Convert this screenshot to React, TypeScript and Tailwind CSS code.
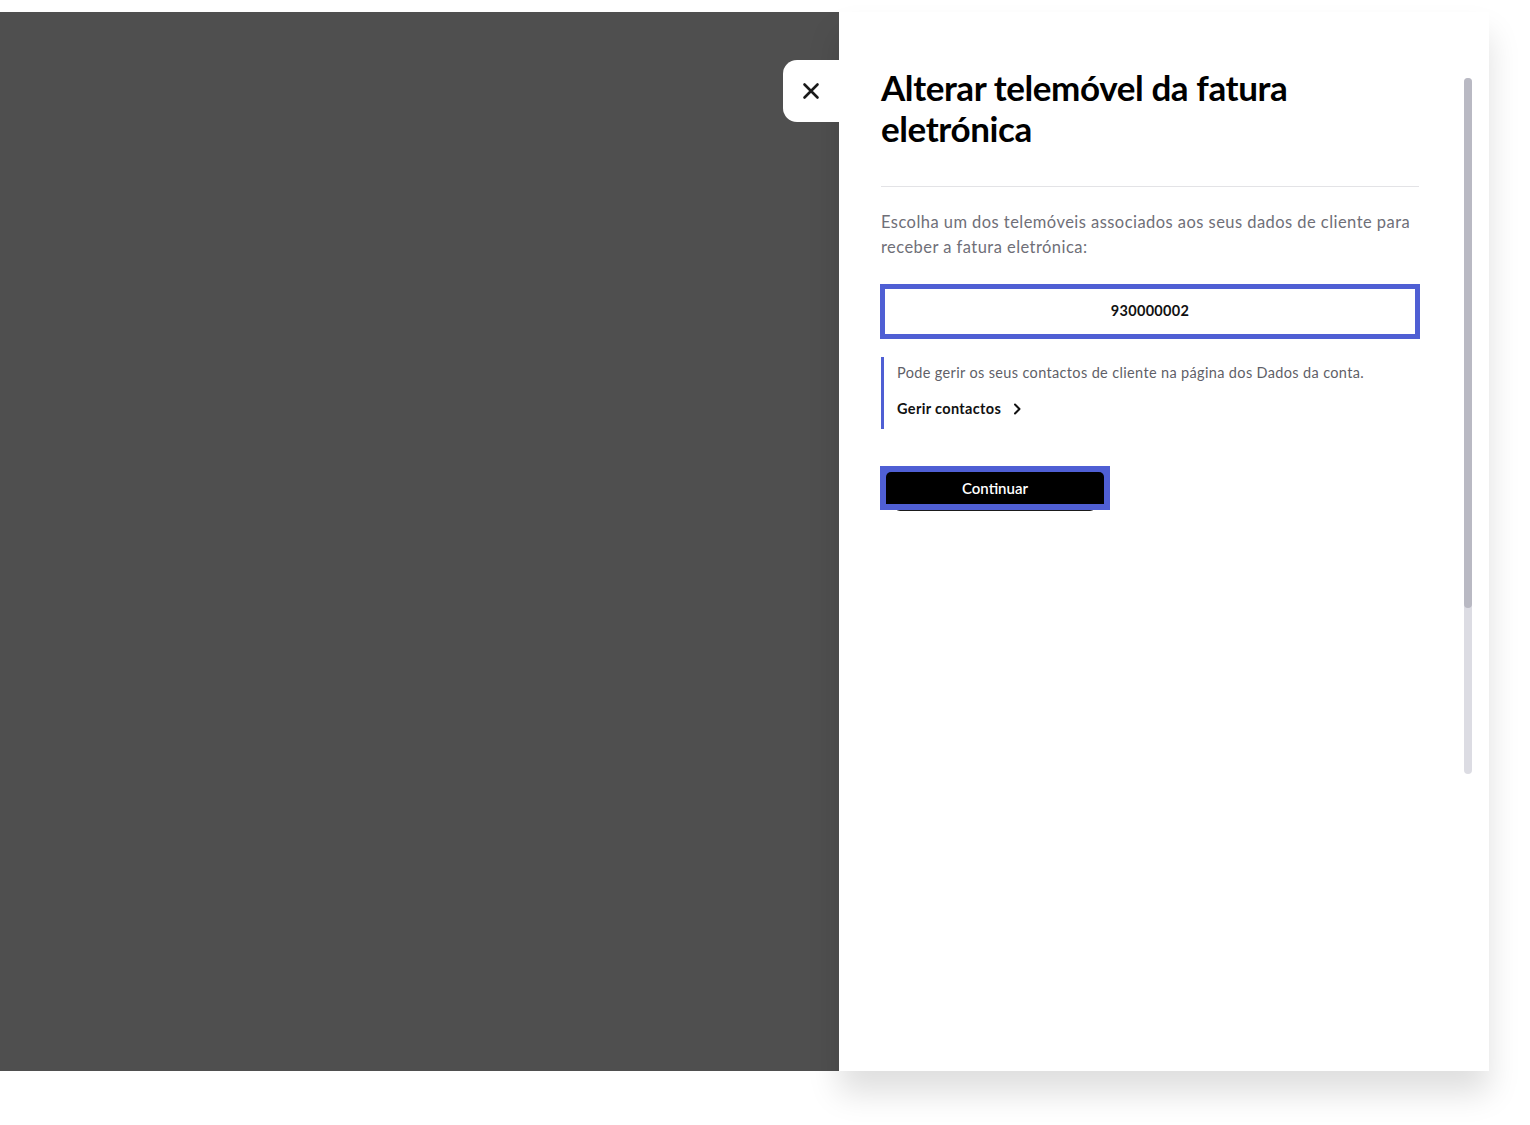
import React from 'react';

const CloseIcon = () => (
  <svg width="18" height="18" viewBox="0 0 18 18" fill="none">
    <path d="M2.5 2.5L15.5 15.5M15.5 2.5L2.5 15.5" stroke="#1a1a1a" strokeWidth="2.6" strokeLinecap="round" />
  </svg>
);

const ChevronRight = () => (
  <svg width="10" height="12" viewBox="0 0 10 12" fill="none">
    <path d="M3 1.5L7.5 6L3 10.5" stroke="#111" strokeWidth="2" strokeLinecap="round" strokeLinejoin="round" />
  </svg>
);

const App: React.FC = () => {
  return (
    <div className="w-[1530px] h-[1125px] bg-white pt-[12px] overflow-hidden" style={{ fontFamily: 'Lato, "Open Sans", sans-serif' }}>
      <div className="flex h-[1059px]">
        <div className="w-[839px] h-full bg-[#4f4f4f]" />
        <div className="relative w-[650px] h-full bg-white shadow-[0_22px_30px_rgba(0,0,0,0.13)]">
          <button className="absolute left-[-56px] top-[48px] w-[56px] h-[62px] bg-white rounded-l-[14px] flex items-center justify-center">
            <CloseIcon />
          </button>

          <div className="absolute right-[17px] top-[66px] w-[8px] h-[696px] rounded-full bg-[#dcdce3]">
            <div className="w-[8px] h-[530px] rounded-full bg-[#b9b9c3]" />
          </div>

          <div className="pl-[42px] pr-[70px] pt-[55px]">
            <h1 className="text-[35px] leading-[41px] font-bold text-black tracking-[-0.4px] pr-[100px]">
              Alterar telemóvel da fatura eletrónica
            </h1>
            <div className="mt-[37px] h-px bg-[#e3e3e6]" />
            <p className="mt-[23px] text-[16.5px] leading-[25px] tracking-[0.45px] text-[#6f6f78]">
              Escolha um dos telemóveis associados aos seus dados de cliente para receber a fatura eletrónica:
            </p>

            <div className="mt-[24px] h-[55px] border-[5px] border-[#4f5fd4] flex items-center justify-center text-[14.5px] font-bold tracking-[0.3px] text-[#111] ml-[-1px] mr-[-1px] pb-[2px]">
              930000002
            </div>

            <div className="mt-[18px] border-l-[3px] border-[#4f5fd4] pl-[13px] pt-[6px] pb-[10px]">
              <p className="text-[14.5px] leading-[20px] tracking-[0.35px] text-[#5f5f68]">
                Pode gerir os seus contactos de cliente na página dos Dados da conta.
              </p>
              <a className="mt-[16px] flex items-center gap-[11px] text-[14.5px] leading-[20px] font-bold tracking-[0.35px] text-[#111]">
                Gerir contactos
                <ChevronRight />
              </a>
            </div>

            <div className="relative mt-[37px] ml-[-1px] w-[230px] h-[44px]">
              <div className="absolute left-[14px] right-[14px] top-[10px] h-[35px] rounded-[6px] bg-[#1a1a1a]" />
              <div className="relative w-[230px] h-[44px] border-[6px] border-[#4f5fd4] bg-[#4f5fd4]">
                <div className="w-full h-full bg-black rounded-t-[5px] flex items-center justify-center text-white text-[15px] font-semibold">
                  Continuar
                </div>
              </div>
            </div>
          </div>
        </div>
      </div>
    </div>
  );
};

export default App;
